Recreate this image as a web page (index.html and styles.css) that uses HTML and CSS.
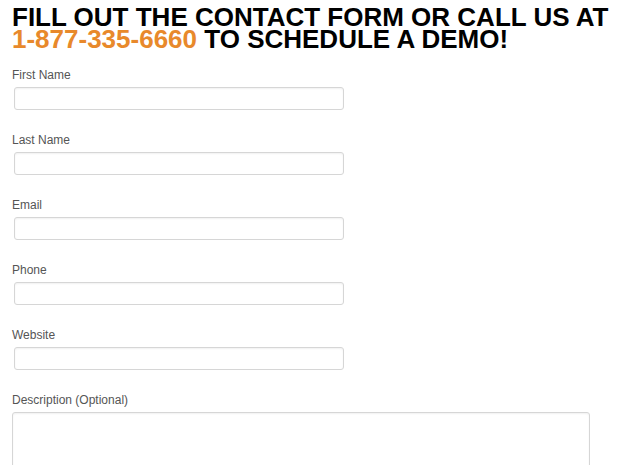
FILE: index.html
```html
<!DOCTYPE html>
<html>
<head>
<meta charset="utf-8">
<link rel="stylesheet" href="styles.css">
</head>
<body>
<div class="page">
  <h1 class="title">FILL OUT THE CONTACT FORM OR CALL US AT<br><span class="phone">1-877-335-6660</span> TO SCHEDULE A DEMO!</h1>
  <form class="form">
    <div class="field"><label class="label">First Name</label><input class="input" type="text"></div>
    <div class="field"><label class="label">Last Name</label><input class="input" type="text"></div>
    <div class="field"><label class="label">Email</label><input class="input" type="text"></div>
    <div class="field"><label class="label">Phone</label><input class="input" type="text"></div>
    <div class="field"><label class="label">Website</label><input class="input" type="text"></div>
    <div class="field"><label class="label">Description (Optional)</label><textarea class="textarea"></textarea></div>
  </form>
</div>
</body>
</html>
```
FILE: styles.css
```css
html, body {
  margin: 0;
  padding: 0;
  background: #fff;
}
.page {
  padding: 6px 12px 0;
  font-family: "Liberation Sans", Arial, sans-serif;
}
.title {
  margin: 0;
  font-size: 26px;
  line-height: 22px;
  font-weight: bold;
  color: #000;
  white-space: nowrap;
}
.phone {
  color: #e8892b;
}
.form {
  display: flex;
  flex-direction: column;
  gap: 23px;
  margin-top: 18px;
}
.field {
  display: flex;
  flex-direction: column;
  align-items: flex-start;
}
.label {
  font-size: 12px;
  line-height: 14px;
  color: #555;
  margin-bottom: 5px;
}
.input {
  box-sizing: border-box;
  width: 330px;
  height: 23px;
  margin: 0 0 0 2px;
  border: 1px solid #d6d6d6;
  border-radius: 3px;
  box-shadow: inset 0 1px 2px rgba(0,0,0,0.06);
  background: #fff;
  padding: 0 4px;
}
.textarea {
  box-sizing: border-box;
  width: 578px;
  height: 100px;
  margin: 0;
  border: 1px solid #d6d6d6;
  border-radius: 3px;
  box-shadow: inset 0 1px 2px rgba(0,0,0,0.06);
  resize: none;
}
```
